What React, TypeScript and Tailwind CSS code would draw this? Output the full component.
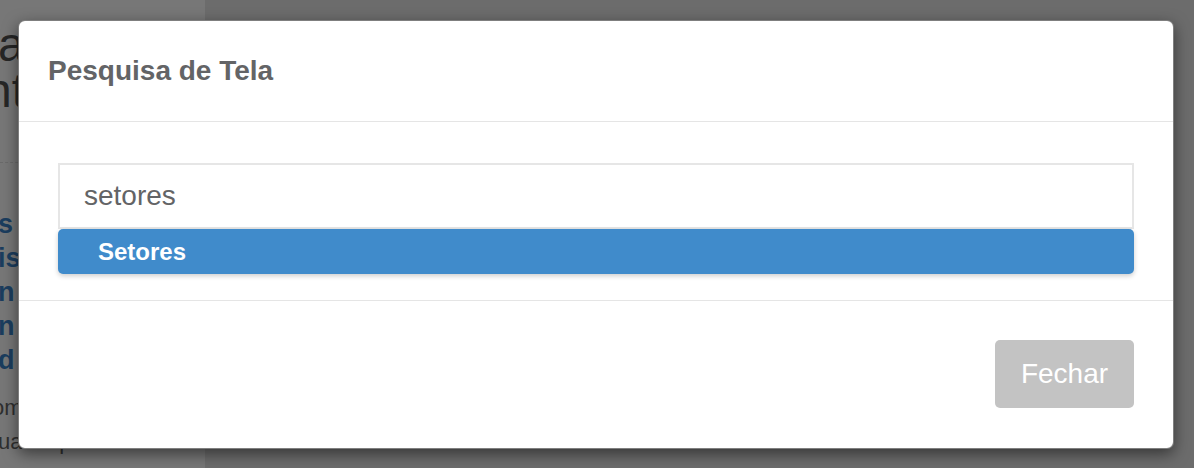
export default function App() {
  return (
    <div
      className="relative h-[468px] w-[1194px] overflow-hidden"
      style={{ fontFamily: '"Liberation Sans", Arial, sans-serif' }}
    >
      {/* page behind the backdrop */}
      <div className="flex h-full">
        <div className="w-[205px] overflow-hidden bg-[#777777]">
          <div className="pt-[22px] text-[48px] leading-[46px] text-[#262626]">
            <div className="ml-[-2px]">a</div>
            <div className="ml-[-15px] whitespace-nowrap">nt</div>
          </div>
          <div className="mt-[48px] border-t border-dashed border-[#6a6a6a]" />
          <div className="ml-[-2px] mt-[44px] whitespace-nowrap text-[27px] font-bold leading-[34px] text-[#1b3d5e]">
            <div>s 5</div>
            <div>is</div>
            <div>n</div>
            <div>n</div>
            <div>d</div>
          </div>
          <div className="ml-[-8px] mt-[14px] whitespace-nowrap text-[22px] leading-[34px] text-[#2f2f2f]">
            <div>om</div>
            <div className="pl-[6px]">ua empresa</div>
          </div>
        </div>
        <div className="flex-1 bg-[#6c6c6c]" />
      </div>

      {/* modal */}
      <div className="absolute left-[18px] top-[20px] flex h-[429px] w-[1156px] flex-col rounded-[7px] border border-black/50 bg-white shadow-[0_5px_15px_rgba(0,0,0,0.5)]">
        <div className="box-border flex h-[101px] items-center border-b border-[#e5e5e5] px-[29px]">
          <h4 className="text-[28px] font-bold text-[#636466]">Pesquisa de Tela</h4>
        </div>

        <div className="border-b border-[#e5e5e5] px-[39px] pb-[26px] pt-[41px]">
          <div className="box-border flex h-[66px] items-center border-2 border-[#e6e6e6] px-[24px] text-[28px] text-[#636466]">
            setores
          </div>
          <div className="flex h-[45px] items-center rounded-[5px] bg-[#408bcb] pl-[40px] text-[24px] font-bold text-white shadow-[0_2px_5px_rgba(0,0,0,0.2)]">
            Setores
          </div>
        </div>

        <div className="flex flex-1 justify-end px-[39px] pt-[39px]">
          <button className="h-[68px] w-[139px] rounded-[5px] bg-[#c3c3c3] text-[28px] text-white">
            Fechar
          </button>
        </div>
      </div>
    </div>
  );
}
